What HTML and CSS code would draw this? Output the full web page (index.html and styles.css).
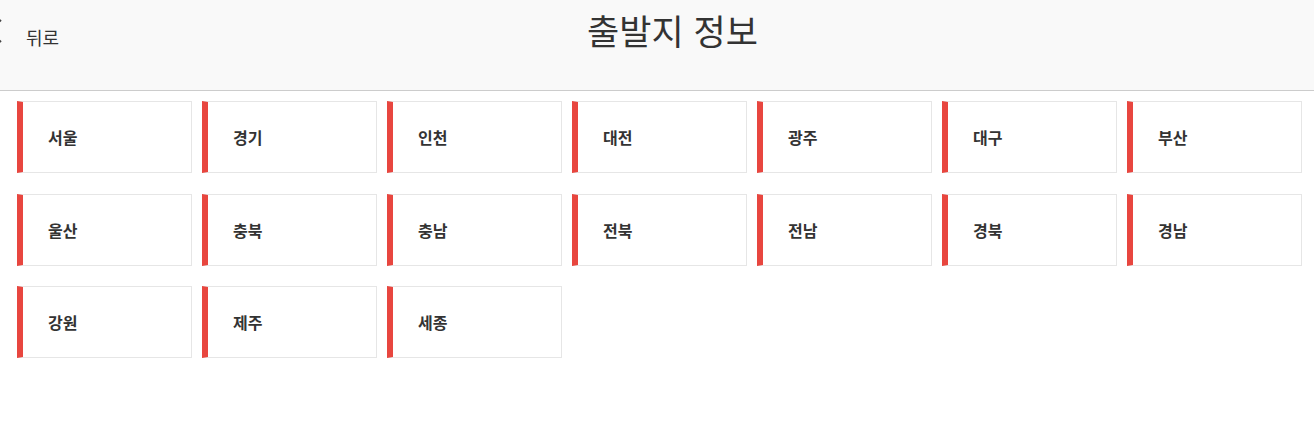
FILE: index.html
```html
<!DOCTYPE html>
<html lang="ko">
<head>
<meta charset="utf-8">
<title>출발지 정보</title>
<link rel="stylesheet" href="styles.css">
</head>
<body>
<header class="header">
  <a class="back" href="#">
    <svg class="back-icon" width="16" height="26" viewBox="0 0 16 26"><polyline points="14,2 2,13 14,24" fill="none" stroke="#444" stroke-width="2"/></svg>
    <span class="back-text">뒤로</span>
  </a>
  <h1 class="title">출발지 정보</h1>
</header>
<main class="regions">
  <a class="region" href="#">서울</a>
  <a class="region" href="#">경기</a>
  <a class="region" href="#">인천</a>
  <a class="region" href="#">대전</a>
  <a class="region" href="#">광주</a>
  <a class="region" href="#">대구</a>
  <a class="region" href="#">부산</a>
  <a class="region" href="#">울산</a>
  <a class="region" href="#">충북</a>
  <a class="region" href="#">충남</a>
  <a class="region" href="#">전북</a>
  <a class="region" href="#">전남</a>
  <a class="region" href="#">경북</a>
  <a class="region" href="#">경남</a>
  <a class="region" href="#">강원</a>
  <a class="region" href="#">제주</a>
  <a class="region" href="#">세종</a>
</main>
</body>
</html>
```
FILE: styles.css
```css
* { box-sizing: border-box; }
html, body { margin: 0; padding: 0; background: #fff; }
body {
  font-family: "Noto Sans CJK KR", "Noto Sans", "Liberation Sans", sans-serif;
  color: #333;
}
.header {
  position: relative;
  height: 91px;
  background: #f9f9f9;
  border-bottom: 1px solid #cccccc;
  padding-left: 31px;
}
.back {
  position: absolute;
  left: -13px;
  top: 18px;
  display: flex;
  align-items: center;
  gap: 23px;
  text-decoration: none;
  color: #333;
}
.back-icon { display: block; }
.back-text {
  font-size: 18px;
  line-height: 26px;
  position: relative;
  top: 6px;
}
.title {
  margin: 0;
  padding-top: 5px;
  text-align: center;
  font-size: 35px;
  font-weight: 400;
  line-height: 50px;
  color: #333;
}
.regions {
  display: grid;
  grid-template-columns: repeat(7, 175px);
  column-gap: 10px;
  row-gap: 20.5px;
  padding: 10px 0 0 17px;
}
.region {
  display: flex;
  align-items: center;
  height: 72px;
  padding-left: 25px;
  border: 1px solid #e6e6e6;
  border-left: 6px solid #e8463f;
  background: #fff;
  color: #333;
  font-size: 16px;
  font-weight: 700;
  text-decoration: none;
}
```
